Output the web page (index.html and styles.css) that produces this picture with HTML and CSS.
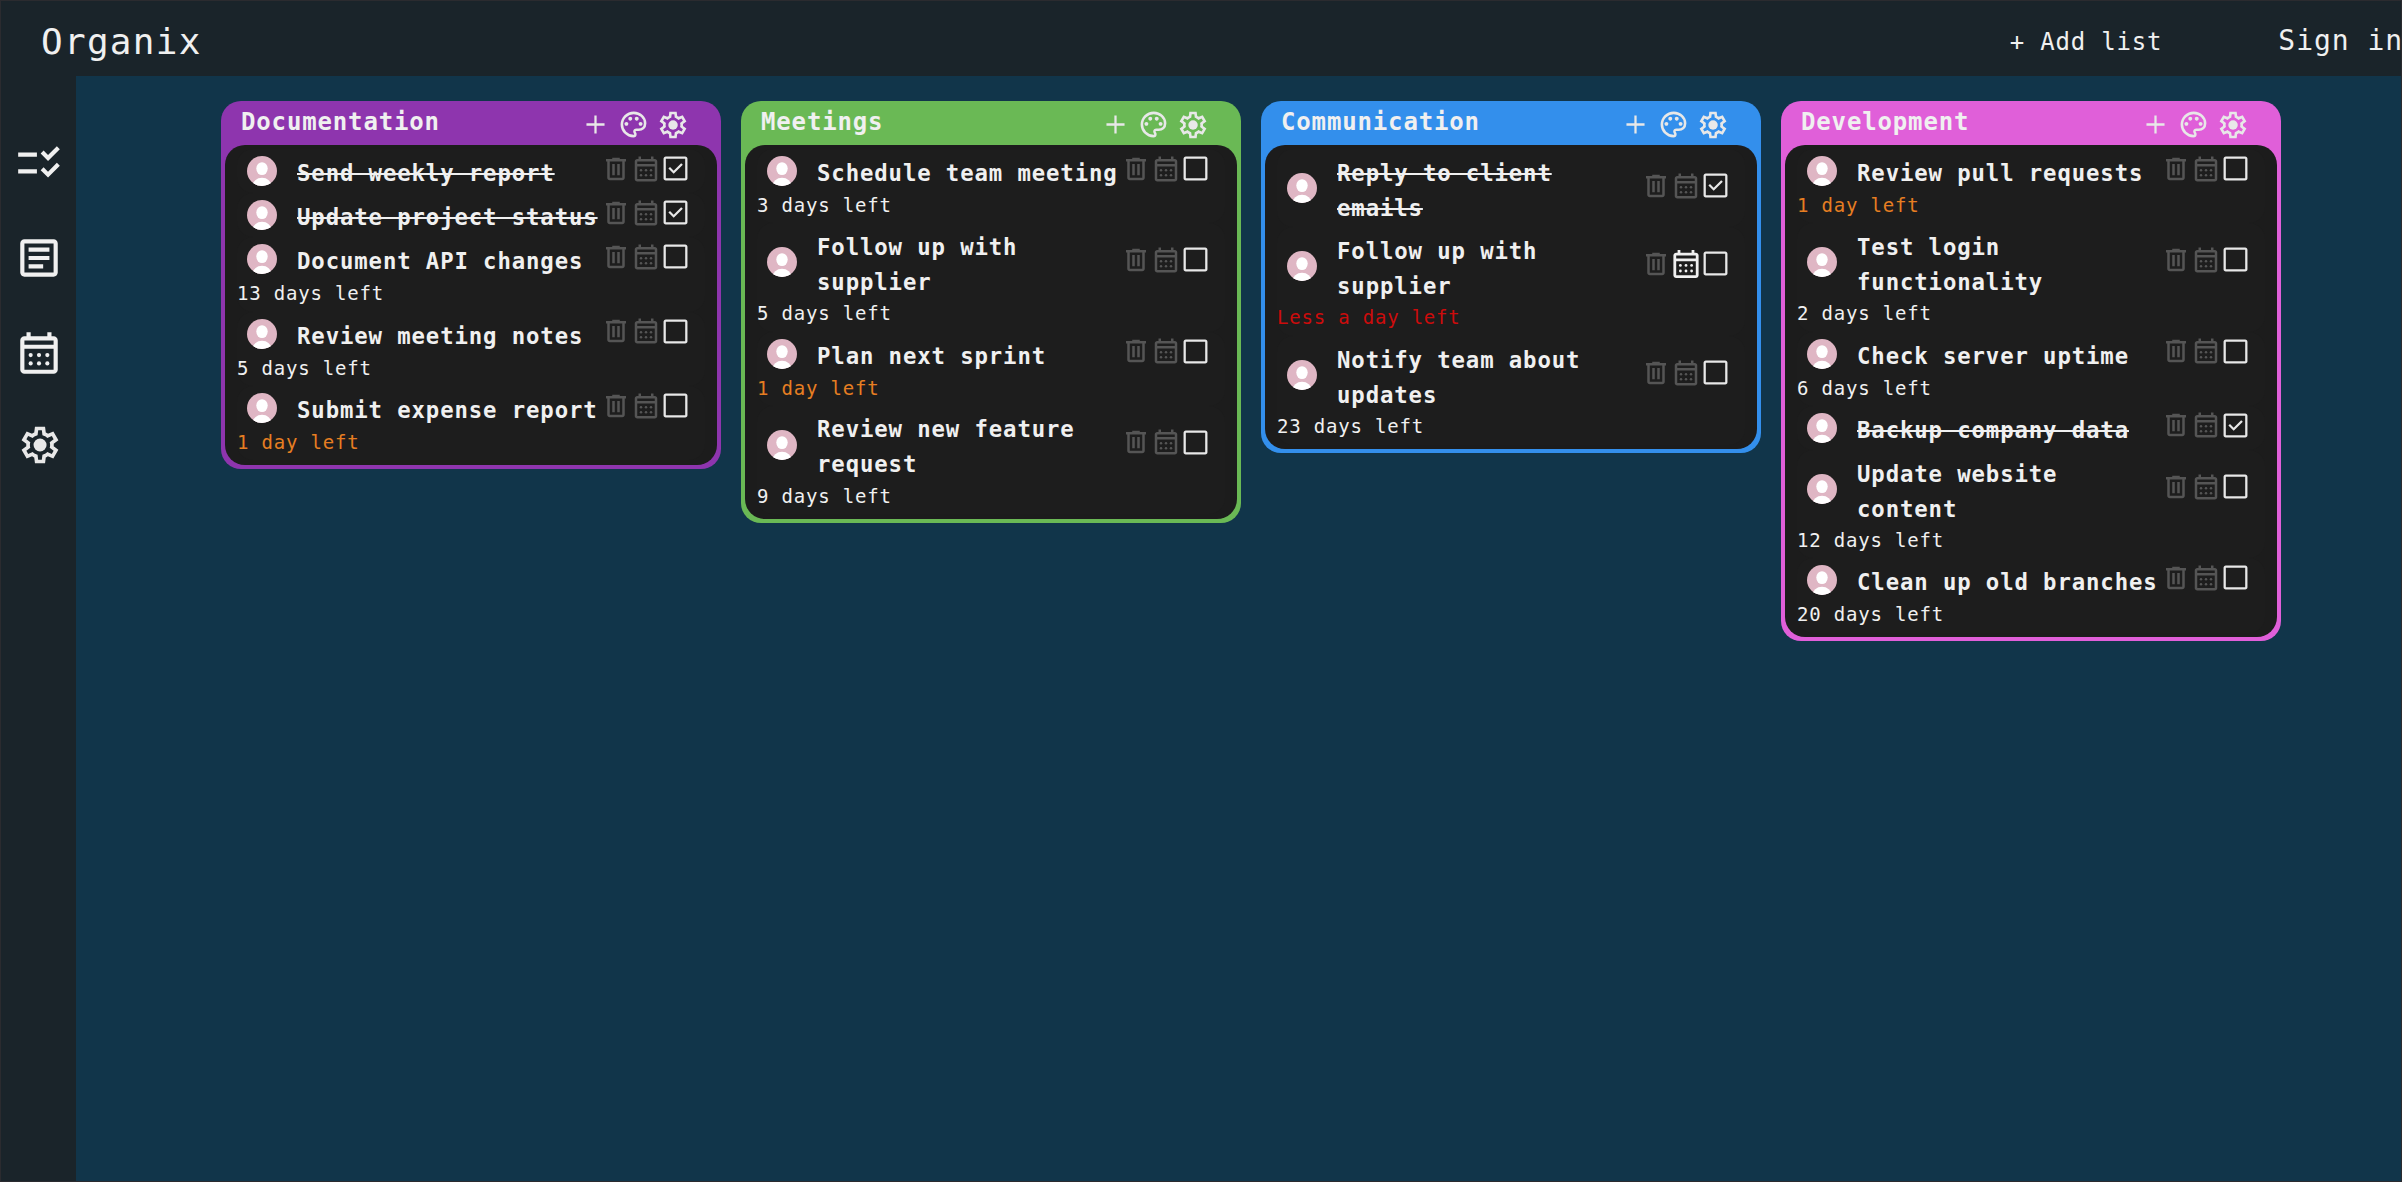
FILE: index.html
```html
<!DOCTYPE html>
<html lang="en">
<head>
<meta charset="utf-8">
<title>Organix</title>
<link rel="stylesheet" href="styles.css">
</head>
<body>
<svg class="sprite" aria-hidden="true">
  <symbol id="i-add" viewBox="0 -960 960 960"><path d="M445-445H200v-70h245v-245h70v245h245v70H515v245h-70z"/></symbol>
  <symbol id="i-palette" viewBox="0 -960 960 960"><path d="M480-80q-82 0-155-31.500t-127.500-86Q143-252 111.500-325T80-480q0-83 32.500-156t88-127Q256-817 330-848.500T488-880q80 0 151 27.500t124.500 76q53.500 48.500 85 115T880-518q0 115-70 176.500T640-280h-74q-9 0-14 5t-5 11q0 12 15 34.500t15 51.500q0 50-27.500 74T480-80Zm-220-360q26 0 43-17t17-43q0-26-17-43t-43-17q-26 0-43 17t-17 43q0 26 17 43t43 17Zm120-160q26 0 43-17t17-43q0-26-17-43t-43-17q-26 0-43 17t-17 43q0 26 17 43t43 17Zm200 0q26 0 43-17t17-43q0-26-17-43t-43-17q-26 0-43 17t-17 43q0 26 17 43t43 17Zm120 160q26 0 43-17t17-43q0-26-17-43t-43-17q-26 0-43 17t-17 43q0 26 17 43t43 17ZM480-160q9 0 14.500-5t5.500-13q0-14-15-33t-15-57q0-42 29-67t71-25h70q66 0 113-38.500T800-518q0-121-92.500-201.500T488-800q-136 0-232 93t-96 227q0 133 93.500 226.500T480-160Z"/></symbol>
  <symbol id="i-gear" viewBox="0 -960 960 960"><path d="m370-80-16-128q-13-5-24.500-12T307-235l-119 50L78-375l103-78q-1-7-1-13.500v-27q0-6.500 1-13.500L78-585l110-190 119 50q11-8 23-15t24-12l16-128h220l16 128q13 5 24.500 12t22.500 15l119-50 110 190-103 78q1 7 1 13.500v27q0 6.500-2 13.500l103 78-110 190-118-50q-11 8-23 15t-24 12L590-80H370Zm70-80h79l14-106q31-8 57.500-23.500T639-327l99 41 39-68-86-65q5-14 7-29.500t2-31.500q0-16-2-31.500t-7-29.500l86-65-39-68-99 42q-22-23-48.500-38.500T533-694l-13-106h-79l-14 106q-31 8-57.500 23.500T321-633l-99-41-39 68 86 64q-5 15-7 30t-2 32q0 16 2 31t7 30l-86 65 39 68 99-42q22 23 48.500 38.500T427-266l13 106Z"/><circle cx="481" cy="-480" r="142"/></symbol>
  <symbol id="i-checklist" viewBox="0 0 24 24"><path d="M11 7H2v2h9V7zm0 8H2v2h9v-2zm5.340-4l-3.540-3.540 1.410-1.410 2.120 2.120 4.240-4.240L22 5.340 16.340 11zm0 8l-3.540-3.540 1.410-1.410 2.120 2.120 4.240-4.240L22 13.340 16.340 19z"/></symbol>
  <symbol id="i-article" viewBox="0 0 24 24"><path d="M19 5v14H5V5h14m0-2H5c-1.100 0-2 .9-2 2v14c0 1.100.9 2 2 2h14c1.100 0 2-.9 2-2V5c0-1.100-.9-2-2-2zM14 17H7v-2h7v2zm3-4H7v-2h10v2zm0-4H7V7h10v2z"/></symbol>
  <symbol id="i-calendar" viewBox="0 -960 960 960"><path d="M200-80q-33 0-56.500-23.500T120-160v-560q0-33 23.500-56.500T200-800h40v-80h80v80h320v-80h80v80h40q33 0 56.500 23.500T840-720v560q0 33-23.500 56.500T760-80H200Zm0-80h560v-400H200v400Zm0-480h560v-80H200v80Z"/><circle cx="320" cy="-440" r="40"/><circle cx="480" cy="-440" r="40"/><circle cx="640" cy="-440" r="40"/><circle cx="320" cy="-280" r="40"/><circle cx="480" cy="-280" r="40"/><circle cx="640" cy="-280" r="40"/></symbol>
  <symbol id="i-trash" viewBox="0 -960 960 960"><path d="M280-120q-33 0-56.500-23.500T200-200v-520h-40v-80h200v-40h240v40h200v80h-40v520q0 33-23.500 56.500T680-120H280Zm400-600H280v520h400v-520ZM360-280h80v-360h-80v360Zm160 0h80v-360h-80v360Z"/></symbol>
  <symbol id="i-box" viewBox="0 -960 960 960"><path d="M180-110q-32 0-51-19t-19-51v-600q0-32 19-51t51-19h600q32 0 51 19t19 51v600q0 32-19 51t-51 19H180Zm0-70h600v-600H180v600Z"/></symbol>
  <symbol id="i-checked" viewBox="0 -960 960 960"><path d="M180-110q-32 0-51-19t-19-51v-600q0-32 19-51t51-19h600q32 0 51 19t19 51v600q0 32-19 51t-51 19H180Zm0-70h600v-600H180v600Zm244-134 282-282-50-50-232 232-114-114-50 50 164 164Z"/></symbol>
  <symbol id="i-user" viewBox="0 0 30 30"><rect width="30" height="30" fill="#dfb6c4"/><ellipse cx="15" cy="12.600" rx="5.700" ry="6.400" fill="#fff"/><ellipse cx="15" cy="30" rx="9.500" ry="8.300" fill="#fff"/></symbol>
</svg>

<div class="app">
  <header class="topbar">
    <h1 class="brand">Organix</h1>
    <a class="add-list">+ Add list</a>
    <a class="sign-in">Sign in</a>
  </header>

  <nav class="sidebar">
    <svg><use href="#i-checklist"/></svg>
    <svg><use href="#i-article"/></svg>
    <svg><use href="#i-calendar"/></svg>
    <svg class="nav-gear"><use href="#i-gear"/></svg>
  </nav>

  <main class="board">
    <section class="list purple">
      <header class="list-head"><h2>Documentation</h2><svg class="add"><use href="#i-add"/></svg><svg class="palette"><use href="#i-palette"/></svg><svg class="gear"><use href="#i-gear"/></svg></header>
      <ul class="tasks">
        <li class="task done">
          <div class="task-row"><svg class="avatar"><use href="#i-user"/></svg><h3>Send weekly report</h3><div class="tools"><svg><use href="#i-trash"/></svg><svg><use href="#i-calendar"/></svg><svg class="check"><use href="#i-checked"/></svg></div></div>
        </li>
        <li class="task done">
          <div class="task-row"><svg class="avatar"><use href="#i-user"/></svg><h3>Update project status</h3><div class="tools"><svg><use href="#i-trash"/></svg><svg><use href="#i-calendar"/></svg><svg class="check"><use href="#i-checked"/></svg></div></div>
        </li>
        <li class="task">
          <div class="task-row"><svg class="avatar"><use href="#i-user"/></svg><h3>Document API changes</h3><div class="tools"><svg><use href="#i-trash"/></svg><svg><use href="#i-calendar"/></svg><svg class="check"><use href="#i-box"/></svg></div></div>
          <p class="due">13 days left</p>
        </li>
        <li class="task">
          <div class="task-row"><svg class="avatar"><use href="#i-user"/></svg><h3>Review meeting notes</h3><div class="tools"><svg><use href="#i-trash"/></svg><svg><use href="#i-calendar"/></svg><svg class="check"><use href="#i-box"/></svg></div></div>
          <p class="due">5 days left</p>
        </li>
        <li class="task">
          <div class="task-row"><svg class="avatar"><use href="#i-user"/></svg><h3>Submit expense report</h3><div class="tools"><svg><use href="#i-trash"/></svg><svg><use href="#i-calendar"/></svg><svg class="check"><use href="#i-box"/></svg></div></div>
          <p class="due soon">1 day left</p>
        </li>
      </ul>
    </section>

    <section class="list green">
      <header class="list-head"><h2>Meetings</h2><svg class="add"><use href="#i-add"/></svg><svg class="palette"><use href="#i-palette"/></svg><svg class="gear"><use href="#i-gear"/></svg></header>
      <ul class="tasks">
        <li class="task">
          <div class="task-row"><svg class="avatar"><use href="#i-user"/></svg><h3>Schedule team meeting</h3><div class="tools"><svg><use href="#i-trash"/></svg><svg><use href="#i-calendar"/></svg><svg class="check"><use href="#i-box"/></svg></div></div>
          <p class="due">3 days left</p>
        </li>
        <li class="task">
          <div class="task-row"><svg class="avatar"><use href="#i-user"/></svg><h3>Follow up with supplier</h3><div class="tools"><svg><use href="#i-trash"/></svg><svg><use href="#i-calendar"/></svg><svg class="check"><use href="#i-box"/></svg></div></div>
          <p class="due">5 days left</p>
        </li>
        <li class="task">
          <div class="task-row"><svg class="avatar"><use href="#i-user"/></svg><h3>Plan next sprint</h3><div class="tools"><svg><use href="#i-trash"/></svg><svg><use href="#i-calendar"/></svg><svg class="check"><use href="#i-box"/></svg></div></div>
          <p class="due soon">1 day left</p>
        </li>
        <li class="task">
          <div class="task-row"><svg class="avatar"><use href="#i-user"/></svg><h3>Review new feature request</h3><div class="tools"><svg><use href="#i-trash"/></svg><svg><use href="#i-calendar"/></svg><svg class="check"><use href="#i-box"/></svg></div></div>
          <p class="due">9 days left</p>
        </li>
      </ul>
    </section>

    <section class="list blue">
      <header class="list-head"><h2>Communication</h2><svg class="add"><use href="#i-add"/></svg><svg class="palette"><use href="#i-palette"/></svg><svg class="gear"><use href="#i-gear"/></svg></header>
      <ul class="tasks">
        <li class="task done">
          <div class="task-row"><svg class="avatar"><use href="#i-user"/></svg><h3>Reply to client emails</h3><div class="tools"><svg><use href="#i-trash"/></svg><svg><use href="#i-calendar"/></svg><svg class="check"><use href="#i-checked"/></svg></div></div>
        </li>
        <li class="task">
          <div class="task-row"><svg class="avatar"><use href="#i-user"/></svg><h3>Follow up with supplier</h3><div class="tools"><svg><use href="#i-trash"/></svg><svg class="active"><use href="#i-calendar"/></svg><svg class="check"><use href="#i-box"/></svg></div></div>
          <p class="due overdue">Less a day left</p>
        </li>
        <li class="task">
          <div class="task-row"><svg class="avatar"><use href="#i-user"/></svg><h3>Notify team about updates</h3><div class="tools"><svg><use href="#i-trash"/></svg><svg><use href="#i-calendar"/></svg><svg class="check"><use href="#i-box"/></svg></div></div>
          <p class="due">23 days left</p>
        </li>
      </ul>
    </section>

    <section class="list pink">
      <header class="list-head"><h2>Development</h2><svg class="add"><use href="#i-add"/></svg><svg class="palette"><use href="#i-palette"/></svg><svg class="gear"><use href="#i-gear"/></svg></header>
      <ul class="tasks">
        <li class="task">
          <div class="task-row"><svg class="avatar"><use href="#i-user"/></svg><h3>Review pull requests</h3><div class="tools"><svg><use href="#i-trash"/></svg><svg><use href="#i-calendar"/></svg><svg class="check"><use href="#i-box"/></svg></div></div>
          <p class="due soon">1 day left</p>
        </li>
        <li class="task">
          <div class="task-row"><svg class="avatar"><use href="#i-user"/></svg><h3>Test login functionality</h3><div class="tools"><svg><use href="#i-trash"/></svg><svg><use href="#i-calendar"/></svg><svg class="check"><use href="#i-box"/></svg></div></div>
          <p class="due">2 days left</p>
        </li>
        <li class="task">
          <div class="task-row"><svg class="avatar"><use href="#i-user"/></svg><h3>Check server uptime</h3><div class="tools"><svg><use href="#i-trash"/></svg><svg><use href="#i-calendar"/></svg><svg class="check"><use href="#i-box"/></svg></div></div>
          <p class="due">6 days left</p>
        </li>
        <li class="task done">
          <div class="task-row"><svg class="avatar"><use href="#i-user"/></svg><h3>Backup company data</h3><div class="tools"><svg><use href="#i-trash"/></svg><svg><use href="#i-calendar"/></svg><svg class="check"><use href="#i-checked"/></svg></div></div>
        </li>
        <li class="task">
          <div class="task-row"><svg class="avatar"><use href="#i-user"/></svg><h3>Update website content</h3><div class="tools"><svg><use href="#i-trash"/></svg><svg><use href="#i-calendar"/></svg><svg class="check"><use href="#i-box"/></svg></div></div>
          <p class="due">12 days left</p>
        </li>
        <li class="task">
          <div class="task-row"><svg class="avatar"><use href="#i-user"/></svg><h3>Clean up old branches</h3><div class="tools"><svg><use href="#i-trash"/></svg><svg><use href="#i-calendar"/></svg><svg class="check"><use href="#i-box"/></svg></div></div>
          <p class="due">20 days left</p>
        </li>
      </ul>
    </section>
  </main>
</div>
</body>
</html>
```
FILE: styles.css
```css
* { box-sizing: border-box; margin: 0; padding: 0; }

body {
  font-family: "DejaVu Sans Mono", "Liberation Mono", monospace;
  color: #f0f0f0;
  background: #1a242a;
  overflow: hidden;
}

svg { display: block; flex: none; fill: #e8e8e8; }
.sprite { display: none; }

.app {
  display: grid;
  grid-template: 75px 1fr / 75px 1fr;
  height: 1182px;
  border: 1px solid #2b2b2f;
}

.topbar {
  grid-column: 1 / -1;
  display: flex;
  align-items: center;
  padding: 6px 0 0 40px;
  white-space: nowrap;
}
.brand { font-size: 36px; font-weight: 400; letter-spacing: 1.280px; }
.add-list { margin-left: auto; font-size: 24px; letter-spacing: 0.800px; }
.sign-in { margin: -2px -2px 0 116px; font-size: 28px; letter-spacing: 0.950px; }

.sidebar {
  display: flex;
  flex-direction: column;
  align-items: center;
  gap: 45px;
  padding: 62px 0 0 0;
}
.sidebar svg { width: 50px; height: 50px; fill: #f0f0f0; }
.sidebar .nav-gear { width: 44px; height: 44px; margin-left: 2px; fill: #e8e8e8; }

.board {
  display: flex;
  align-items: flex-start;
  gap: 20px;
  padding: 25px 0 0 145px;
  background: #11354a;
}

.list { width: 500px; padding: 0 4px 4px; border-radius: 20px; }
.purple { background: #8e35ae; }
.green { background: #6ab955; }
.blue { background: #338fec; }
.pink { background: #e05fd9; }

.list-head {
  display: flex;
  align-items: center;
  height: 43.500px;
  padding: 4px 28px 0 16px;
}
.list-head h2 {
  flex: 1;
  margin-bottom: 6.500px;
  font-size: 24px;
  line-height: 36px;
  letter-spacing: 0.850px;
}
.add { width: 31px; height: 31px; margin-right: 7px; }
.palette { width: 31px; height: 31px; margin-right: 8px; }
.gear { width: 32px; height: 32px; margin-top: 1px; }

.tasks {
  list-style: none;
  padding: 4.500px 12px 4.500px;
  border-radius: 20px;
  background: #1c1c1c;
}
.task { padding: 4.100px 0; border-radius: 16px; background: #1d1d1d; }
.task-row { display: flex; align-items: center; min-height: 36px; padding-left: 10px; }
.avatar { width: 30px; height: 30px; margin-right: 20px; border-radius: 50%; }
.task h3 {
  flex: 1;
  padding-top: 2.500px;
  margin: 0 -12px -2.500px 0;
  font-size: 22.300px;
  line-height: 35px;
  letter-spacing: 0.890px;
}
.done h3 { text-decoration: line-through; text-decoration-thickness: 2px; }

.tools { display: flex; align-items: center; height: 30px; margin: 0 14px 5px 12px; }
.tools svg { width: 30px; height: 30px; fill: #555; }
.tools .active { fill: #f0f0f0; transform: scale(1.120); }
.tools .check { width: 31px; height: 31px; margin-left: -1px; fill: #e8e8e8; }

.due { height: 30.100px; font-size: 19px; line-height: 32px; letter-spacing: 0.800px; }
.soon { color: #e67e22; }
.overdue { height: 31px; line-height: 33px; color: #cc0c0c; }
```
